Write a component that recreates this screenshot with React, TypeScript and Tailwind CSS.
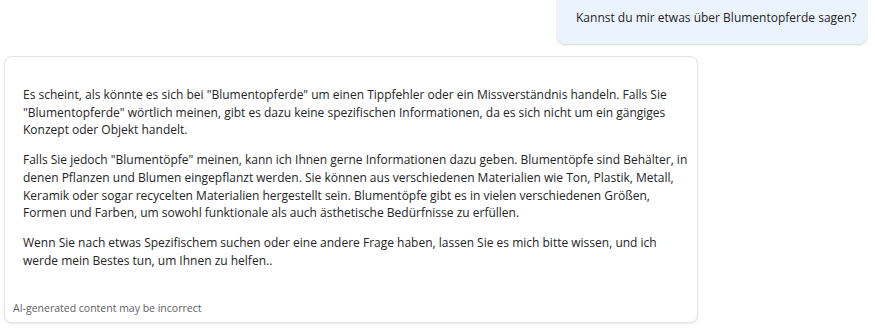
const para1 = [
  'Es scheint, als könnte es sich bei "Blumentopferde" um einen Tippfehler oder ein Missverständnis handeln. Falls Sie',
  '"Blumentopferde" wörtlich meinen, gibt es dazu keine spezifischen Informationen, da es sich nicht um ein gängiges',
  'Konzept oder Objekt handelt.',
];

const para2 = [
  'Falls Sie jedoch "Blumentöpfe" meinen, kann ich Ihnen gerne Informationen dazu geben. Blumentöpfe sind Behälter, in',
  'denen Pflanzen und Blumen eingepflanzt werden. Sie können aus verschiedenen Materialien wie Ton, Plastik, Metall,',
  'Keramik oder sogar recycelten Materialien hergestellt sein. Blumentöpfe gibt es in vielen verschiedenen Größen,',
  'Formen und Farben, um sowohl funktionale als auch ästhetische Bedürfnisse zu erfüllen.',
];

const para3 = [
  'Wenn Sie nach etwas Spezifischem suchen oder eine andere Frage haben, lassen Sie es mich bitte wissen, und ich',
  'werde mein Bestes tun, um Ihnen zu helfen..',
];

function Paragraph({ lines }: { lines: string[] }) {
  return (
    <p className="mb-[12px] last:mb-0">
      {lines.map((line) => (
        <span key={line} className="block whitespace-nowrap">
          {line}
        </span>
      ))}
    </p>
  );
}

export default function App() {
  return (
    <div
      className="w-full h-[329px] bg-white overflow-hidden text-[#242424]"
      style={{ fontFamily: '"Segoe UI", "Open Sans", sans-serif' }}
    >
      <div className="flex justify-end pr-[8px]">
        <div className="-mt-[8px] bg-[#ebf3fc] rounded-[8px] shadow-[0_1px_2px_rgba(0,0,0,0.14),0_0_2px_rgba(0,0,0,0.08)] pt-[17px] pb-[17px] pl-[19px] w-[310px] text-[12px] leading-[18px] whitespace-nowrap">
          Kannst du mir etwas über Blumentopferde sagen?
        </div>
      </div>

      <div className="ml-[4px] mt-[12px] w-[694px] bg-white rounded-[8px] border border-[#e6e6e6] shadow-[0_1px_2px_rgba(0,0,0,0.1)]">
        <div className="pt-[29px] px-[18px] text-[12px] leading-[17.7px]">
          <Paragraph lines={para1} />
          <Paragraph lines={para2} />
          <Paragraph lines={para3} />
        </div>
        <div className="px-[8px] pt-[32px] pb-[6px] text-[10.5px] leading-[15px] text-[#616161]">
          AI-generated content may be incorrect
        </div>
      </div>
    </div>
  );
}
